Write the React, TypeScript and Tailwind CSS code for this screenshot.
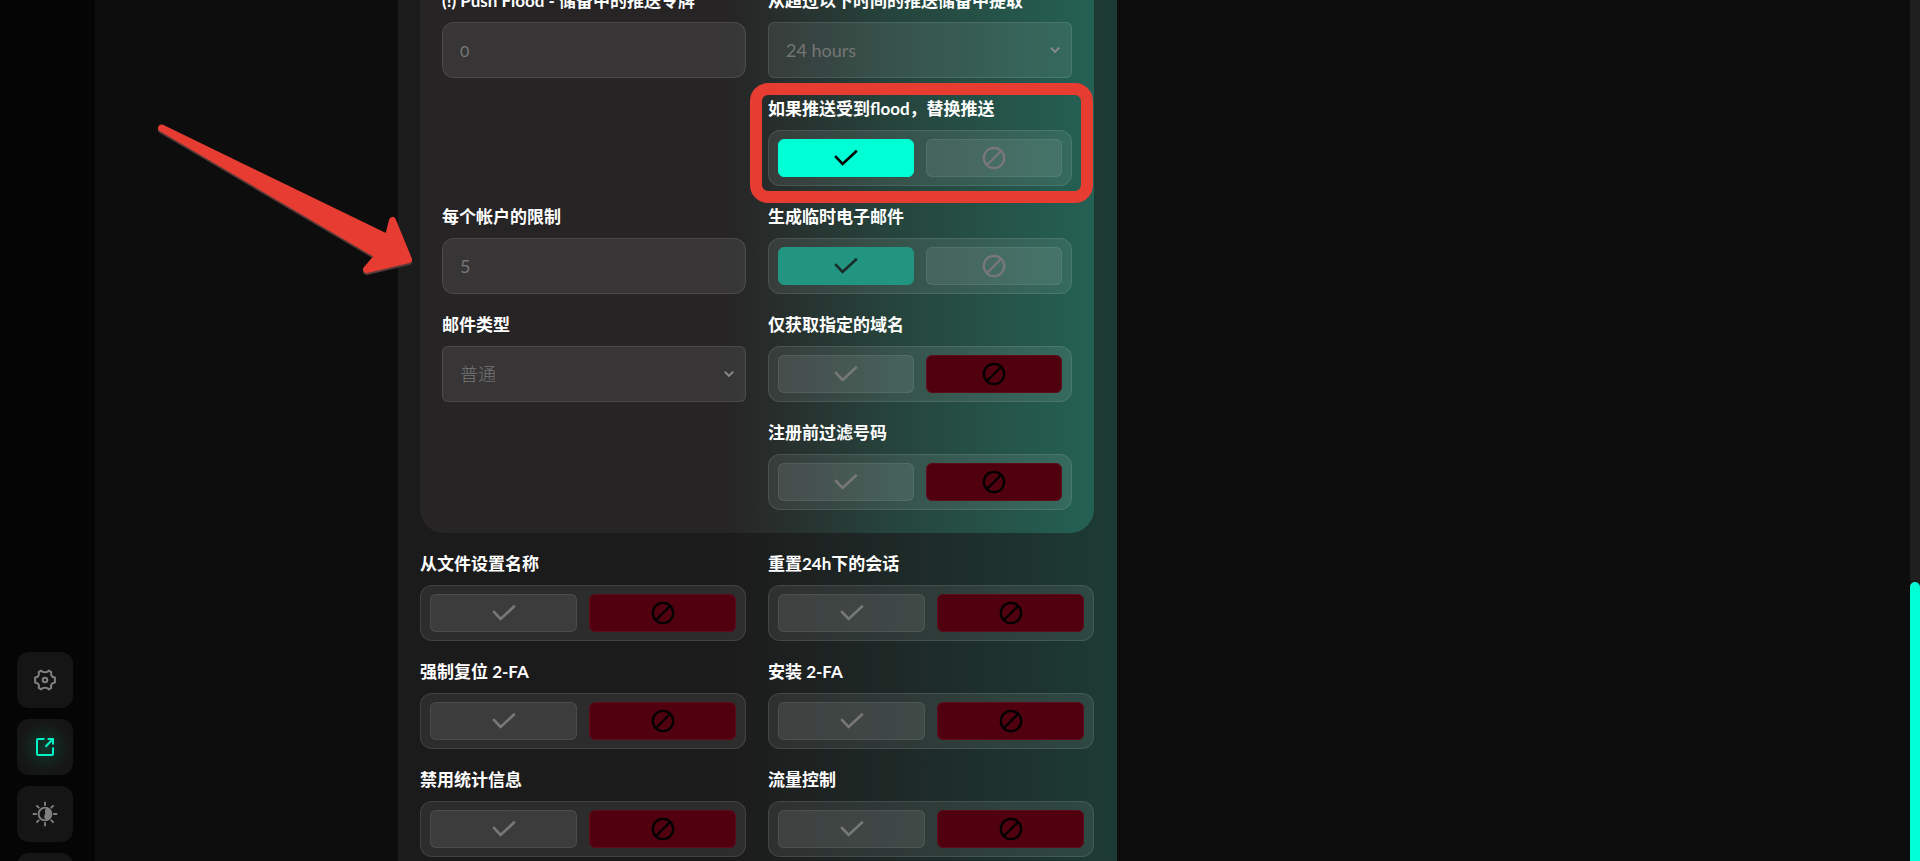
import { useState, type ReactNode } from "react";
import clsx from "clsx";

const FIELD =
  "h-14 w-full border border-white/10 bg-white/8 px-[17px] text-[#757575] outline-none";

function CheckIcon() {
  return (
    <svg width="24" height="18" viewBox="0 0 24 18" fill="none" stroke="currentColor" strokeWidth="2.6">
      <path d="M1.2 7.2 L8.6 15 L22.8 1.8" />
    </svg>
  );
}

function BanIcon() {
  return (
    <svg width="24" height="24" viewBox="0 0 24 24" fill="none" stroke="currentColor" strokeWidth="2.3">
      <circle cx="12" cy="12" r="10.2" />
      <path d="M5 19 L19 5" />
    </svg>
  );
}

function GearIcon() {
  return (
    <svg width="24" height="24" viewBox="0 0 24 24" fill="none" stroke="currentColor" strokeWidth="2" strokeLinejoin="round">
      <path d="M8.2 2.6 Q9 4.3 12 4.3 T15.8 2.6 L18.3 4.1 Q17.6 6.4 18.6 7.9 T21.9 9.6 V14.4 Q19.6 14.6 18.6 16.1 T18.3 19.9 L15.8 21.4 Q15 19.7 12 19.7 T8.2 21.4 L5.7 19.9 Q6.4 17.6 5.4 16.1 T2.1 14.4 V9.6 Q4.4 9.4 5.4 7.9 T5.7 4.1 Z" />
      <circle cx="12" cy="12" r="2.3" />
    </svg>
  );
}

function ShareIcon() {
  return (
    <svg width="20" height="20" viewBox="0 0 20 20" fill="none" stroke="currentColor" strokeWidth="2">
      <path d="M9.5 2 H3 Q2 2 2 3 V17 Q2 18 3 18 H17 Q18 18 18 17 V10.5" />
      <path d="M10.5 9.8 L17 3" />
      <path d="M12.6 2 H18 V7.4" />
    </svg>
  );
}

function ThemeIcon() {
  return (
    <svg width="26" height="26" viewBox="0 0 26 26" fill="none" stroke="currentColor" strokeWidth="1.9">
      <circle cx="13" cy="13" r="6.4" />
      <path
        d="M14.6 7 A6.4 6.4 0 0 1 14.6 19 Q11.4 17.6 12.4 14.4 Q13.6 12.6 13 11 Q12.4 8.6 14.6 7 Z"
        fill="currentColor"
        stroke="none"
      />
      <path d="M13 .8v4M13 21.2v4M.8 13h4M21.2 13h4M4.4 4.4l2.8 2.8M18.8 18.8l2.8 2.8M4.4 21.6l2.8-2.8M18.8 7.2l2.8-2.8" />
    </svg>
  );
}

interface FieldProps {
  id?: string;
  label: string;
  children: ReactNode;
  className?: string;
}

function Field({ id, label, children, className }: FieldProps) {
  return (
    <div className={clsx("flex flex-col gap-3", className)}>
      <label
        htmlFor={id}
        id={id ? undefined : label}
        className="h-[18px] text-[17px] leading-[18px] font-bold whitespace-nowrap text-white"
      >
        {label}
      </label>
      {children}
    </div>
  );
}

interface SelectFieldProps {
  id: string;
  label: string;
  options: string[];
  className?: string;
}

function SelectField({ id, label, options, className }: SelectFieldProps) {
  return (
    <Field id={id} label={label}>
      <div className="relative">
        <select id={id} className={clsx(FIELD, "appearance-none rounded-md text-lg", className)}>
          {options.map((o) => (
            <option key={o}>{o}</option>
          ))}
        </select>
        <svg
          className="pointer-events-none absolute top-6 right-3 text-[#8a8a8a]"
          width="10"
          height="8"
          viewBox="0 0 10 8"
          fill="none"
          stroke="currentColor"
          strokeWidth="2"
        >
          <path d="M.8 1.6 L5 5.9 L9.2 1.6" />
        </svg>
      </div>
    </Field>
  );
}

interface TextFieldProps {
  id: string;
  label: string;
  placeholder: string;
  className?: string;
}

function TextField({ id, label, placeholder, className }: TextFieldProps) {
  return (
    <Field id={id} label={label}>
      <input
        id={id}
        placeholder={placeholder}
        className={clsx(FIELD, "rounded-xl placeholder:text-[#757575]", className)}
      />
    </Field>
  );
}

interface ToggleFieldProps {
  label: string;
  initial?: boolean;
  dimmed?: boolean;
  marked?: boolean;
}

function ToggleField({ label, initial = false, dimmed, marked }: ToggleFieldProps) {
  const [on, setOn] = useState(initial);
  const idle = "border-white/8 bg-white/8 text-[#787878]";

  return (
    <Field label={label} className={marked ? "relative" : undefined}>
      <div
        role="group"
        aria-labelledby={label}
        className="grid h-14 grid-cols-2 gap-3 rounded-xl border border-white/10 bg-white/8 px-[9px] py-2"
      >
        <button
          type="button"
          aria-label="on"
          aria-pressed={on}
          onClick={() => setOn(true)}
          className={clsx(
            "flex items-center justify-center rounded-md border",
            !on && idle,
            on && !dimmed && "border-[#00ffd5] bg-[#00ffd5] text-black",
            on && dimmed && "border-[#21957f] bg-[#21957f] text-[#1b2b29]",
          )}
        >
          <CheckIcon />
        </button>
        <button
          type="button"
          aria-label="off"
          aria-pressed={!on}
          onClick={() => setOn(false)}
          className={clsx(
            "flex items-center justify-center rounded-md border",
            on ? idle : "border-[#5e0c1b] bg-[#50000e] text-black",
          )}
        >
          <BanIcon />
        </button>
      </div>
      {marked && (
        <div className="pointer-events-none absolute -top-[17px] -right-[21px] -bottom-[17px] -left-[18px] rounded-[18px] border-12 border-[#e63c32]" />
      )}
    </Field>
  );
}

function Arrow() {
  const shape =
    "M7.5 8 L234 118 L238.5 100.5 L254.5 139.5 L212.5 149.5 L224.5 135.5 Z";
  return (
    <svg
      className="pointer-events-none absolute top-[128px] right-full -mr-[18px]"
      width="262"
      height="158"
      viewBox="0 0 262 158"
      strokeLinejoin="round"
      strokeWidth="7"
    >
      <path d={shape} transform="translate(0 2)" fill="#5a3a38" stroke="#5a3a38" />
      <path d={shape} fill="#e63c32" stroke="#e63c32" />
    </svg>
  );
}

function Sidebar() {
  const tile = "flex size-14 shrink-0 items-center justify-center rounded-xl bg-[#151515]";
  return (
    <nav className="flex w-[95px] shrink-0 flex-col justify-end bg-[#050505] pl-[17px]">
      <div className="-mb-12 flex flex-col gap-[11px]">
        <button type="button" aria-label="settings" className={clsx(tile, "text-[#808080]")}>
          <GearIcon />
        </button>
        <button
          type="button"
          aria-label="open"
          className={clsx(
            tile,
            "bg-[radial-gradient(circle,#12352c_0%,#151817_60%,#151515_75%)] text-[#00f5c4]",
          )}
        >
          <ShareIcon />
        </button>
        <button type="button" aria-label="theme" className={clsx(tile, "text-[#808080]")}>
          <ThemeIcon />
        </button>
        <button type="button" aria-label="more" className={tile} />
      </div>
    </nav>
  );
}

export default function App() {
  return (
    <div className="flex h-screen overflow-hidden bg-[#0d0d0d] font-[Lato,'Noto_Sans_CJK_SC',sans-serif]">
      <Sidebar />
      <main className="grid min-w-0 flex-1 grid-cols-[303fr_719fr_793fr]">
        <section className="relative col-start-2 -mt-2 bg-linear-to-r from-[#1c1b1c] from-45% to-[#1c3b34] pr-[23px] pl-[22px]">
          <div className="grid grid-cols-2 gap-[22px] rounded-b-3xl bg-linear-to-r from-[#262425] from-45% via-[#25443c] via-70% to-[#246154] px-[22px] pb-[23px]">
            <TextField
              id="push"
              label="(!) Push Flood - 储备中的推送令牌"
              placeholder="0"
              className="text-base"
            />
            <SelectField id="reserve" label="从超过以下时间的推送储备中提取" options={["24 hours"]} />
            <div />
            <ToggleField label="如果推送受到flood，替换推送" initial marked />
            <TextField id="limit" label="每个帐户的限制" placeholder="5" className="text-lg" />
            <ToggleField label="生成临时电子邮件" initial dimmed />
            <SelectField id="mail" label="邮件类型" options={["普通"]} className="font-light" />
            <ToggleField label="仅获取指定的域名" />
            <div />
            <ToggleField label="注册前过滤号码" />
          </div>
          <div className="grid grid-cols-2 gap-[22px] py-[22px]">
            <ToggleField label="从文件设置名称" />
            <ToggleField label="重置24h下的会话" />
            <ToggleField label="强制复位 2-FA" />
            <ToggleField label="安装 2-FA" />
            <ToggleField label="禁用统计信息" />
            <ToggleField label="流量控制" />
          </div>
          <Arrow />
        </section>
      </main>
      {/* 滚动条 */}
      <div className="flex w-[10px] shrink-0 flex-col justify-end bg-[#1f1f1f]">
        <div className="h-[279px] rounded-t-full bg-[#00ffd5]" />
      </div>
    </div>
  );
}
